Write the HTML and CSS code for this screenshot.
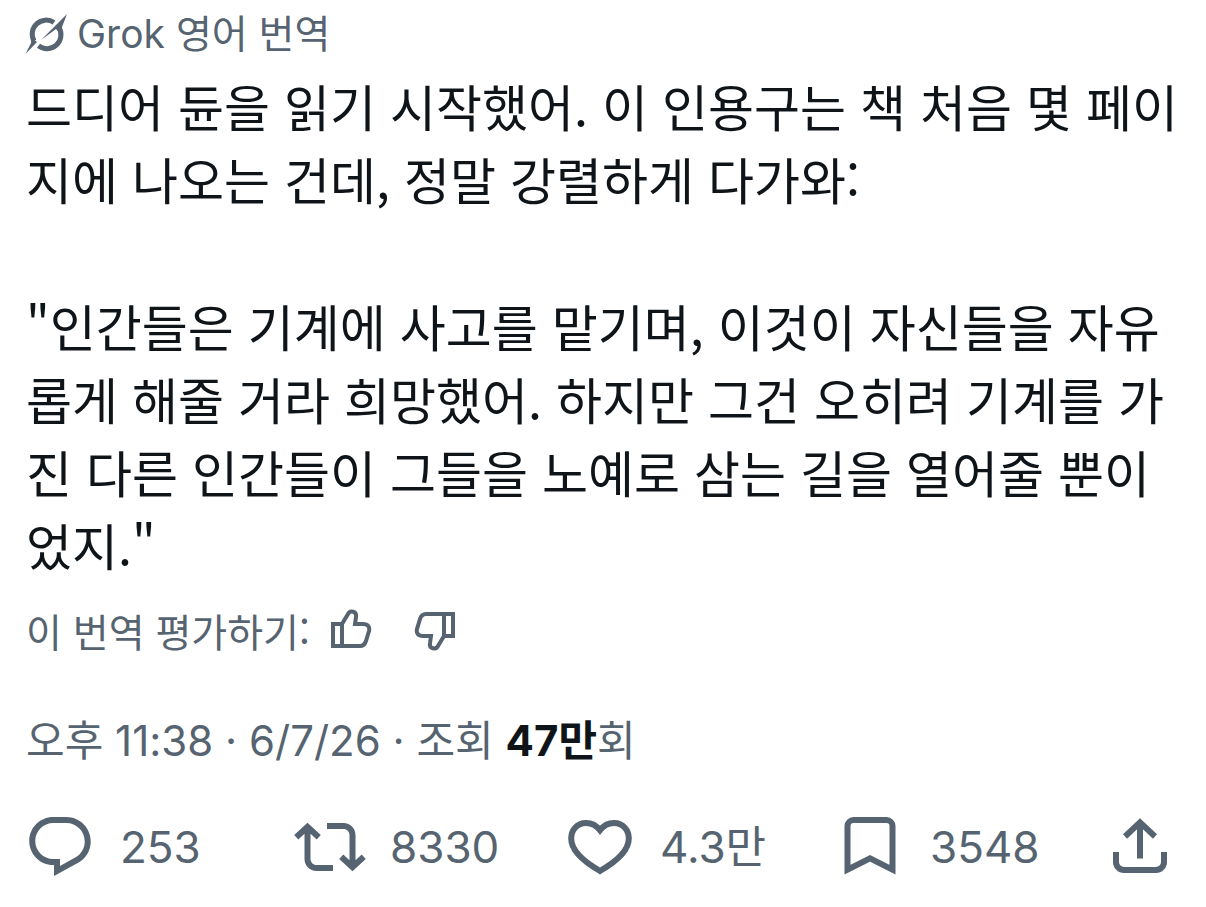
FILE: index.html
```
<!DOCTYPE html>
<html lang="ko">
<head>
  <meta charset="UTF-8" />
  <meta name="viewport" content="width=device-width, initial-scale=1.0"/>
  <title>Post</title>
  <link rel="stylesheet" href="styles.css">
</head>
<body>
  <article class="post">
    <header class="translated">
      <svg class="grok-icon" viewBox="0 0 42 42" aria-hidden="true">
        <path class="ring" d="M29 9.500A14 14 0 0 0 9 28M34 14.500A14 14 0 0 1 13.500 32.800" />
        <path class="slash" d="M42 1L37 14L34.500 20L31 16L16 27L31 12ZM0.500 41L6 30L6.500 25L12 29Z" />
      </svg>
      <span>Grok 영어 번역</span>
    </header>

    <div class="post-text">
      <p>드디어 듄을 읽기 시작했어. 이 인용구는 책 처음 몇 페이지에 나오는 건데, 정말 강렬하게 다가와:</p>
      <p>"인간들은 기계에 사고를 맡기며, 이것이 자신들을 자유롭게 해줄 거라 희망했어. 하지만 그건 오히려 기계를 가진 다른 인간들이 그들을 노예로 삼는 길을 열어줄 뿐이었지."</p>
    </div>

    <div class="rating">
      <span>이 번역 평가하기:</span>
      <div class="rate-buttons">
        <button class="rate-btn" aria-label="좋아요">
          <svg viewBox="0 0 42 42" aria-hidden="true"><path d="M3 15H12V37H3ZM12 15L18 5C20 1 27 2 26 8L25 15H33C38 15 40 18 39 22L36 32C35 35 33 37 30 37H12" /></svg>
        </button>
        <button class="rate-btn" aria-label="싫어요">
          <svg viewBox="0 0 42 42" aria-hidden="true"><path d="M39 27H30V5H39ZM30 27L24 37C22 41 15 40 16 34L17 27H9C4 27 2 24 3 20L6 10C7 7 9 5 12 5H30" /></svg>
        </button>
      </div>
    </div>

    <p class="meta">오후 11:38 · 6/7/26 · 조회 <strong>47만</strong>회</p>

    <footer class="actions">
      <button class="action">
        <svg class="solid" viewBox="0 0 24 24" aria-hidden="true"><path d="M1.751 10c0-4.420 3.584-8 8.005-8h4.366c4.490 0 8.129 3.640 8.129 8.130 0 2.960-1.607 5.680-4.196 7.110l-8.054 4.460v-3.690h-.067c-4.490.100-8.183-3.510-8.183-8.010zm8.005-6c-3.317 0-6.005 2.690-6.005 6 0 3.370 2.770 6.080 6.138 6.010l.351-.010h1.761v2.300l5.087-2.810c1.951-1.080 3.163-3.130 3.163-5.360 0-3.390-2.744-6.130-6.129-6.130H9.756z" /></svg>
        <span>253</span>
      </button>
      <button class="action">
        <svg class="solid" viewBox="0 0 24 24" aria-hidden="true"><path d="M4.500 3.880l4.432 4.140-1.364 1.460L5.500 7.550V16c0 1.100.896 2 2 2H13v2H7.500c-2.209 0-4-1.790-4-4V7.550L1.432 9.480.068 8.020 4.500 3.880zM16.500 6H11V4h5.500c2.209 0 4 1.790 4 4v8.450l2.068-1.930 1.364 1.460-4.432 4.140-4.432-4.140 1.364-1.460 2.068 1.930V8c0-1.100-.896-2-2-2z" /></svg>
        <span>8330</span>
      </button>
      <button class="action">
        <svg viewBox="0 0 24 24" aria-hidden="true"><path d="M12 6.400C10.600 4.600 9.100 4 7.400 4C4.200 4 2.400 6.400 2.400 9.200C2.400 13.400 6.400 16.800 12 20C17.600 16.800 21.600 13.400 21.600 9.200C21.600 6.400 19.800 4 16.600 4C14.900 4 13.400 4.600 12 6.400Z" /></svg>
        <span>4.3만</span>
      </button>
      <button class="action">
        <svg viewBox="0 0 24 24" aria-hidden="true"><path d="M4.500 19.550V5C4.500 3.900 5.400 3 6.500 3H17.500C18.600 3 19.500 3.900 19.500 5V19.550L12 15.800Z" /></svg>
        <span>3548</span>
      </button>
      <button class="action" aria-label="공유">
        <svg viewBox="0 0 24 24" aria-hidden="true"><path d="M4 13.700V17C4 18.500 5.200 19.700 6.700 19.700H17.300C18.800 19.700 20 18.500 20 17V13.700M12 15.800V4M7 8.500L12 3.800L17 8.500" /></svg>
      </button>
    </footer>
  </article>
</body>
</html>
```
FILE: styles.css
```
* {
  box-sizing: border-box;
}

body {
  margin: 0;
  background-color: #fff;
  color: #0f1419;
  font-family: Inter, 'Noto Sans CJK KR', sans-serif;
}

p {
  margin: 0;
}

button {
  border: none;
  padding: 0;
  background: none;
  color: inherit;
  font: inherit;
  cursor: pointer;
}

svg {
  display: block;
  flex-shrink: 0;
  fill: none;
  stroke: currentColor;
}

.post {
  padding: 8px 24px;
}

.translated {
  display: flex;
  align-items: center;
  gap: 10px;
  padding-left: 1px;
  color: #566370;
  font-size: 39px;
  line-height: 52px;
}

.grok-icon {
  width: 42px;
  height: 42px;
}

.grok-icon .ring {
  stroke-width: 5;
}

.grok-icon .slash {
  fill: currentColor;
  stroke: none;
}

.post-text {
  padding: 9px 0 0 2px;
  font-family: 'Noto Sans CJK KR', sans-serif;
  font-size: 50px;
  line-height: 73px;
  word-break: break-all;
}

.post-text p + p {
  margin-top: 74px;
}

.rating {
  display: flex;
  align-items: center;
  gap: 20px;
  padding: 23px 0 0 2px;
  color: #566370;
  font-family: 'Noto Sans CJK KR', sans-serif;
  font-size: 39px;
  line-height: 52px;
}

.rate-buttons {
  display: flex;
  gap: 42px;
}

.rate-btn svg {
  width: 42px;
  height: 42px;
  stroke-width: 4;
}

.meta {
  padding: 57px 0 0 2px;
  color: #566370;
  font-size: 42px;
  line-height: 56px;
}

.meta strong {
  color: #0f1419;
}

.actions {
  display: grid;
  grid-template-columns: repeat(4, 1fr) auto;
  padding: 42px 6px 0 0;
  color: #566370;
  font-size: 44px;
  line-height: 60px;
}

.action {
  display: flex;
  align-items: center;
  gap: 24px;
}

.action svg {
  width: 72px;
  height: 72px;
  stroke-width: 2;
}

.action .solid {
  fill: currentColor;
  stroke: none;
}
```
